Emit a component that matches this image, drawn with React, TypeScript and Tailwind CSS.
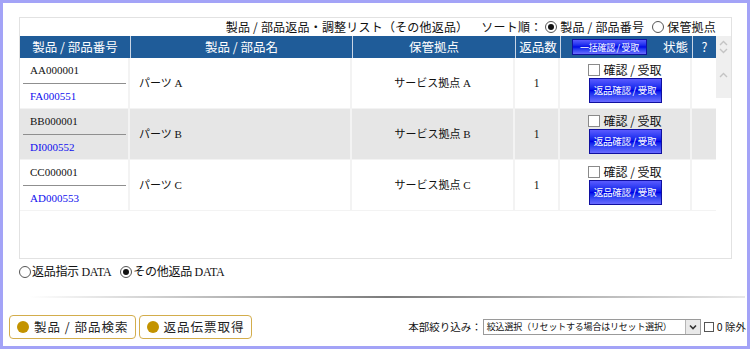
import React from 'react';

const jp = "font-['Noto_Sans_CJK_JP',sans-serif]";
const serif = "font-['Liberation_Serif','Noto_Sans_CJK_JP',serif]";

interface ReturnRow {
  code: string;
  slip: string;
  name: string;
  place: string;
  qty: number;
}

const rows: ReturnRow[] = [
  { code: 'AA000001', slip: 'FA000551', name: 'パーツ A', place: 'サービス拠点 A', qty: 1 },
  { code: 'BB000001', slip: 'DI000552', name: 'パーツ B', place: 'サービス拠点 B', qty: 1 },
  { code: 'CC000001', slip: 'AD000553', name: 'パーツ C', place: 'サービス拠点 C', qty: 1 }
];

function Radio({ checked }: { checked?: boolean }) {
  return (
    <span className="inline-flex h-[12px] w-[12px] shrink-0 items-center justify-center rounded-full border border-[#555] bg-white">
      {checked && <span className="h-[6px] w-[6px] rounded-full bg-[#111]" />}
    </span>
  );
}

function Chevron({ up }: { up?: boolean }) {
  return (
    <svg width="9" height="6" viewBox="0 0 9 6">
      <polyline
        points={up ? '1,5 4.5,1.5 8,5' : '1,1 4.5,4.5 8,1'}
        fill="none"
        stroke="#c4c4c4"
        strokeWidth="1.4"
      />
    </svg>
  );
}

function BlueButton({ label, small }: { label: string; small?: boolean }) {
  return (
    <div
      className={`flex items-center justify-center whitespace-nowrap border border-[#1010a0] bg-gradient-to-b from-[#5a5aff] via-[#0000e8] to-[#6b6bff] leading-none tracking-[-0.3px] text-white ${jp} ${
        small ? 'h-[16px] w-[75px] text-[9px]' : 'h-[25px] w-[73px] text-[9.5px]'
      }`}
    >
      {label}
    </div>
  );
}

function GoldButton({ label }: { label: string }) {
  return (
    <div className={`flex h-[24px] items-center gap-[5px] whitespace-nowrap rounded-[4px] border border-[#d3ad4c] bg-white pl-[7px] pr-[6px] text-[12.5px] tracking-[1px] text-[#222] ${jp}`}>
      <span className="h-[12px] w-[12px] rounded-full bg-[#c39300]" />
      {label}
    </div>
  );
}

export default function App() {
  return (
    <div className="box-border flex h-[349px] w-[750px] flex-col border-[3px] border-[#a3a3f7] bg-white">
      {/* List panel */}
      <div className="ml-[16px] mt-[14px] flex h-[242px] w-[713px] flex-col border border-[#e2e2e2]">
        <div className={`flex h-[18px] items-center justify-end gap-[3px] whitespace-nowrap pr-[15px] text-[12px] leading-none tracking-[0.2px] text-[#111] ${jp}`}>
          <span>製品 / 部品返品・調整リスト（その他返品）</span>
          <span className="ml-[10px]">ソート順：</span>
          <Radio checked />
          <span>製品 / 部品番号</span>
          <span className="ml-[2px]" />
          <Radio />
          <span>保管拠点</span>
        </div>

        {/* Header */}
        <div className={`flex h-[22px] whitespace-nowrap text-[12.5px] text-white ${jp}`}>
          <div className="grid w-[696px] grid-cols-[110px_222px_163px_45px_132px_24px] bg-[#1f5c99]">
            <div className="flex items-center justify-center">製品 / 部品番号</div>
            <div className="flex items-center justify-center border-l border-[#c9d5e5]">製品 / 部品名</div>
            <div className="flex items-center justify-center border-l border-[#c9d5e5]">保管拠点</div>
            <div className="flex items-center justify-center border-l border-[#c9d5e5]">返品数</div>
            <div className="flex items-center gap-[16px] border-l border-[#c9d5e5] pl-[11px]">
              <BlueButton label="一括確認 / 受取" small />
              <span>状態</span>
            </div>
            <div className="flex items-center justify-center border-l border-[#c9d5e5]">?</div>
          </div>
          <div className="flex w-[15px] flex-col items-center justify-center gap-[2px] bg-[#efefef]">
            <Chevron up />
            <Chevron />
          </div>
        </div>

        {/* Rows */}
        <div className="flex">
          <div className="w-[696px]">
            {rows.map((r, i) => (
              <div
                key={r.code}
                className={`grid h-[51px] grid-cols-[110px_222px_163px_45px_132px_24px] border-b border-[#f3f3f3] ${
                  i === 1 ? 'bg-[#e6e6e6]' : 'bg-white'
                }`}
              >
                <div className={`flex flex-col border-r-2 border-[#f3f3f3] pl-[3px] pr-[2px] text-[11px] ${serif}`}>
                  <div className="flex h-[25px] items-center pl-[7px] text-[#111]">{r.code}</div>
                  <div className="h-px bg-[#8f8f8f]" />
                  <div className="flex h-[25px] items-center pl-[7px] text-[#1010ee]">{r.slip}</div>
                </div>
                <div className={`flex items-center border-r-2 border-[#f3f3f3] pl-[9px] text-[11px] text-[#111] ${serif}`}>
                  {r.name}
                </div>
                <div className={`flex items-center justify-center border-r-2 border-[#f3f3f3] text-[11px] text-[#111] ${serif}`}>
                  {r.place}
                </div>
                <div className={`flex items-center justify-center border-r-2 border-[#f3f3f3] text-[11.5px] text-[#111] ${serif}`}>
                  {r.qty}
                </div>
                <div className="flex flex-col items-center border-r-2 border-[#f3f3f3] pt-[4px]">
                  <div className={`flex h-[15px] items-center gap-[3px] whitespace-nowrap text-[12px] leading-none text-[#111] ${jp}`}>
                    <span className="h-[12px] w-[12px] border border-[#8a8a8a] bg-white" />
                    確認 / 受取
                  </div>
                  <div className="mt-[1px]">
                    <BlueButton label="返品確認 / 受取" />
                  </div>
                </div>
                <div />
              </div>
            ))}
          </div>
          <div className="flex w-[15px] flex-col">
            <div className="flex h-[40px] items-center justify-center bg-[#efefef] pb-[6px]">
              <Chevron up />
            </div>
          </div>
        </div>
      </div>

      {/* Data source */}
      <div className={`ml-[16px] mt-[4px] flex h-[17px] items-center whitespace-nowrap text-[12px] leading-none tracking-[-0.3px] text-[#111] ${serif}`}>
        <Radio />
        <span className="ml-[1px]">返品指示 DATA</span>
        <span className="ml-[9px]">
          <Radio checked />
        </span>
        <span className="ml-[1px]">その他返品 DATA</span>
      </div>

      {/* Divider */}
      <div className="ml-[26px] mr-[2px] mt-[16px] h-[2px] bg-gradient-to-r from-transparent via-[#7c7c7c] to-[#e8e8e8]" />

      {/* Footer */}
      <div className="mt-[17px] flex items-center pl-[6px] pr-[1px]">
        <div className="flex gap-[3px]">
          <GoldButton label="製品 / 部品検索" />
          <GoldButton label="返品伝票取得" />
        </div>
        <div className={`ml-auto flex items-center whitespace-nowrap text-[10.5px] text-[#111] ${jp}`}>
          <span>本部絞り込み：</span>
          <div className="ml-[1px] flex h-[16px] w-[218px] items-center border border-[#9a9a9a] bg-white">
            <span className="flex-1 pl-[3px] text-[9px] leading-[14px] tracking-[-0.2px]">絞込選択（リセットする場合はリセット選択）</span>
            <span className="flex h-full w-[15px] shrink-0 items-center justify-center border-l border-[#b5b5b5] bg-[#e9e9e9]">
              <svg width="8" height="6" viewBox="0 0 8 6">
                <polyline points="1,1.5 4,4.5 7,1.5" fill="none" stroke="#333" strokeWidth="1.6" />
              </svg>
            </span>
          </div>
          <span className="ml-[3px] h-[10px] w-[10px] border border-[#555] bg-white" />
          <span className="ml-[3px]">0 除外</span>
        </div>
      </div>
    </div>
  );
}
